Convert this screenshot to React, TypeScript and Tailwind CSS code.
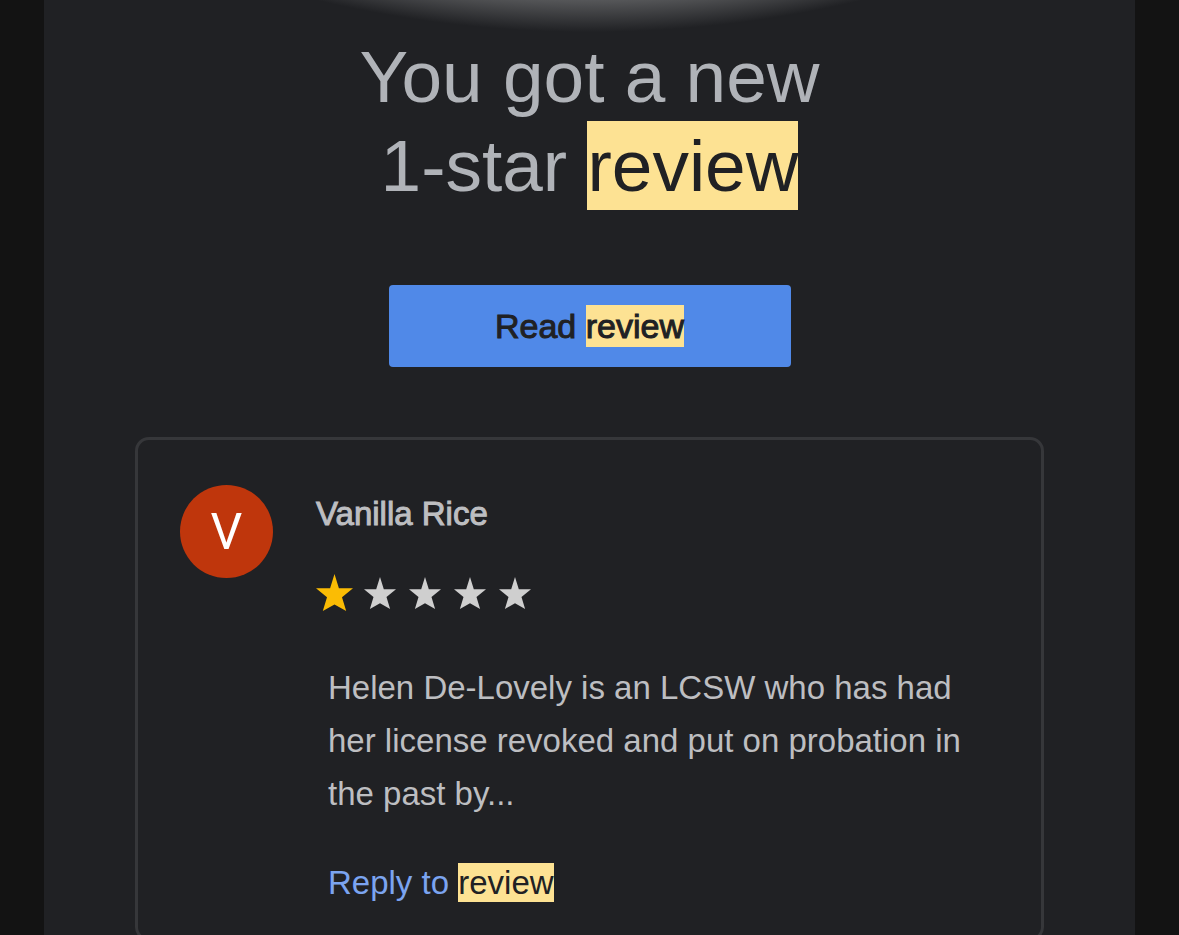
import type { ReactNode } from "react";
import clsx from "clsx";

const review = {
  author: "Vanilla Rice",
  initial: "V",
  rating: 1,
  text: "Helen De-Lovely is an LCSW who has had her license revoked and put on probation in the past by...",
};

// Highlighted search match
const Highlight = ({ children }: { children: ReactNode }) => (
  <mark className="inline-block bg-[#fde293] text-[#202124]">{children}</mark>
);

const Star = ({ filled }: { filled: boolean }) => (
  <svg
    viewBox="0 0 37 37"
    className={clsx(filled ? "size-[37px] fill-[#fbbc04]" : "size-8 fill-[#cfcfcf]")}
    aria-hidden="true"
  >
    <path d="M18.5 0 22.9 14.2H37L26 23.2 30.2 37 18.5 30.4 6.8 37 11 23.2 0 14.2H14.1Z" />
  </svg>
);

const StarRating = ({ rating }: { rating: number }) => (
  <div className="mt-[41px] flex h-[37px] items-center gap-2" role="img" aria-label={`${rating} out of 5`}>
    {[1, 2, 3, 4, 5].map((n) => (
      <span key={n} className="flex w-[37px] justify-center">
        <Star filled={n <= rating} />
      </span>
    ))}
  </div>
);

const ReviewCard = () => (
  <article className="mx-[91px] mt-[70px] flex items-start rounded-[14px] border-[3px] border-[#36373a] px-[42px] pt-[45px] pb-9">
    <div className="flex size-[93px] shrink-0 items-center justify-center rounded-full bg-[#bf360c] font-[Roboto,sans-serif] text-[50px] leading-none text-white">
      {review.initial}
    </div>
    <div className="ml-[43px] min-w-0 flex-1 pt-[9px] text-[33px] text-[#bdbec1]">
      <h2 className="leading-[39px] [-webkit-text-stroke:1px]">{review.author}</h2>
      <StarRating rating={review.rating} />
      <div className="pr-7 pl-3">
        <p className="mt-[50px] leading-[53px]">{review.text}</p>
        <a href="#reply" className="mt-[43px] block leading-[39px] text-[#7ba4f0]">
          Reply to <Highlight>review</Highlight>
        </a>
      </div>
    </div>
  </article>
);

export default function App() {
  return (
    <div className="h-screen overflow-hidden bg-[#131313] px-11 font-['Liberation_Sans',Arial,sans-serif]">
      <main className="min-h-full bg-[#202124]">
        {/* Lower edge of the header glow */}
        <div className="h-8 bg-[radial-gradient(circle_1190px_at_50%_-1158px,#5c5d5f_97%,#202124_100%)]" />
        <h1 className="text-center text-[73px] leading-[89px] text-[#b0b3b8]">
          You got a new
          <br />
          1-star <Highlight>review</Highlight>
        </h1>
        <button
          type="button"
          className="mx-auto mt-[75px] flex h-[82px] w-[402px] items-center justify-center rounded bg-[#5089e8] text-[34px] leading-[42px] whitespace-pre text-[#202124] [-webkit-text-stroke:1px]"
        >
          Read <Highlight>review</Highlight>
        </button>
        <ReviewCard />
      </main>
    </div>
  );
}
